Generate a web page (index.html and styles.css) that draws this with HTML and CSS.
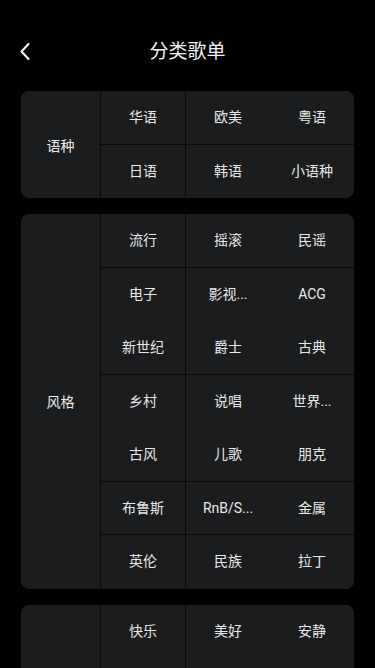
FILE: index.html
```html
<!DOCTYPE html>
<html lang="zh-CN">
<head>
<meta charset="utf-8">
<meta name="viewport" content="width=device-width, initial-scale=1">
<title>分类歌单</title>
<link rel="stylesheet" href="styles.css">
</head>
<body>
<div class="header">
  <div class="back">
    <svg width="10" height="18" viewBox="0 0 10 18"><polyline points="8.5,1 1.5,8.5 8.5,16" fill="none" stroke="#ffffff" stroke-width="2" stroke-linecap="round" stroke-linejoin="round"/></svg>
  </div>
  <div class="title">分类歌单</div>
  <div></div>
</div>

<div class="card">
  <div class="label">语种</div>
  <div class="grid">
    <div class="row line"><span class="c1">华语</span><span class="c2">欧美</span><span class="c3">粤语</span></div>
    <div class="row"><span class="c1">日语</span><span class="c2">韩语</span><span class="c3">小语种</span></div>
  </div>
</div>

<div class="card">
  <div class="label">风格</div>
  <div class="grid">
    <div class="row line"><span class="c1">流行</span><span class="c2">摇滚</span><span class="c3">民谣</span></div>
    <div class="row"><span class="c1">电子</span><span class="c2">影视...</span><span class="c3">ACG</span></div>
    <div class="row line"><span class="c1">新世纪</span><span class="c2">爵士</span><span class="c3">古典</span></div>
    <div class="row"><span class="c1">乡村</span><span class="c2">说唱</span><span class="c3">世界...</span></div>
    <div class="row line"><span class="c1">古风</span><span class="c2">儿歌</span><span class="c3">朋克</span></div>
    <div class="row line"><span class="c1">布鲁斯</span><span class="c2">RnB/S...</span><span class="c3">金属</span></div>
    <div class="row"><span class="c1">英伦</span><span class="c2">民族</span><span class="c3">拉丁</span></div>
  </div>
</div>

<div class="card">
  <div class="label">情感</div>
  <div class="grid">
    <div class="row"><span class="c1">快乐</span><span class="c2">美好</span><span class="c3">安静</span></div>
    <div class="row line"><span class="c1">伤感</span><span class="c2">治愈</span><span class="c3">放松</span></div>
    <div class="row"><span class="c1">孤独</span><span class="c2">感动</span><span class="c3">兴奋</span></div>
    <div class="row"><span class="c1">思念</span><span class="c2">浪漫</span><span class="c3">怀旧</span></div>
  </div>
</div>
</body>
</html>
```

FILE: styles.css
```css
* { box-sizing: border-box; }
html, body {
  margin: 0;
  padding: 0;
  background: #000000;
}
body {
  font-family: Roboto, "Noto Sans CJK SC", sans-serif;
  color: #e8e8e8;
  width: 375px;
  overflow: hidden;
}
.header {
  height: 91px;
  padding-top: 12px;
  display: grid;
  grid-template-columns: 1fr auto 1fr;
  align-items: center;
}
.back {
  padding-left: 20px;
  display: flex;
  align-items: center;
  height: 18px;
}
.back svg { display: block; }
.title {
  font-size: 19px;
  color: #f2f2f2;
  line-height: 24px;
}
.card {
  margin: 0 21px 16px 21px;
  background: #1b1c1e;
  border-radius: 8px;
  display: flex;
  overflow: hidden;
}
.label {
  width: 80px;
  flex: none;
  border-right: 1px solid #0a0a0a;
  display: flex;
  align-items: center;
  justify-content: center;
  font-size: 14px;
  color: #ededed;
}
.grid {
  flex: 1;
  display: flex;
  flex-direction: column;
}
.row {
  height: 53.5px;
  display: grid;
  grid-template-columns: 85px 84px 1fr;
  font-size: 14px;
  border-bottom: 1px solid transparent;
}
.row.line { border-bottom-color: #0a0a0a; }
.row span {
  display: block;
  text-align: center;
  line-height: 52.5px;
  white-space: nowrap;
  min-width: 0;
}
.c1 { border-right: 1px solid #0a0a0a; }
```
